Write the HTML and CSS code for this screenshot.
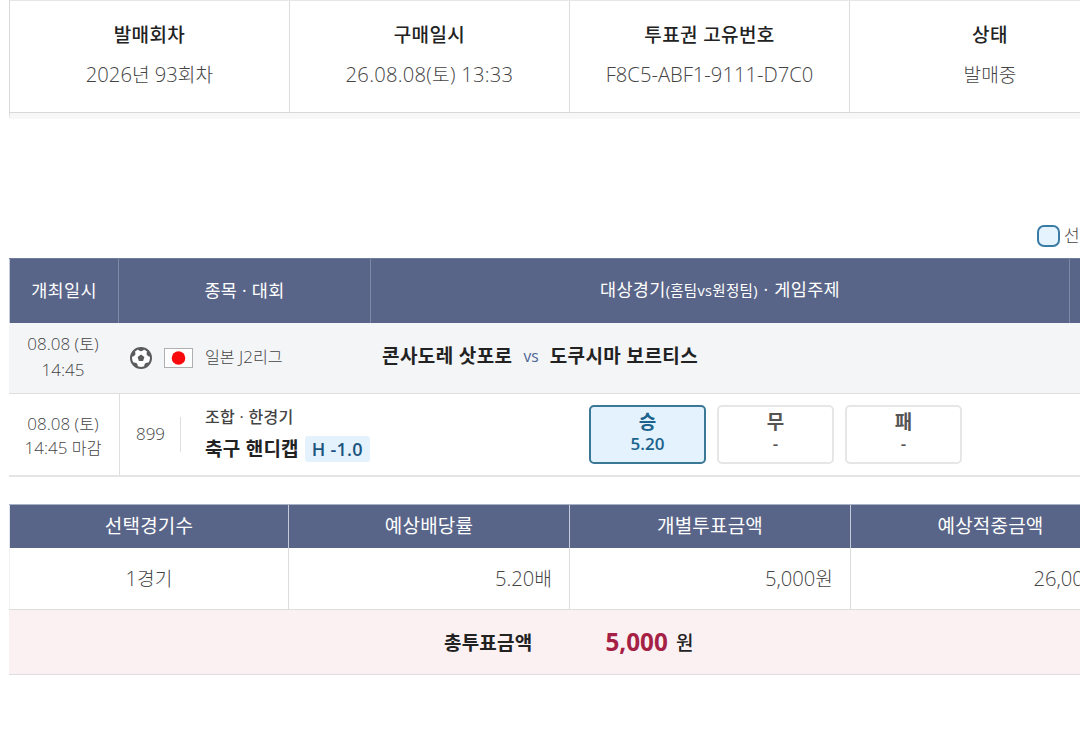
FILE: index.html
```html
<!DOCTYPE html>
<html lang="ko">

<head>
    <meta charset="UTF-8">
    <title>구매내역 상세</title>
    <link rel="stylesheet" href="styles.css">
</head>

<body>
    <div class="wrap">
        <!-- 구매 정보 -->
        <dl class="buyInfo">
            <div>
                <dt>발매회차</dt>
                <dd>2026<span class="ko">년</span> 93<span class="ko">회차</span></dd>
            </div>
            <div>
                <dt>구매일시</dt>
                <dd class="time">26.08.08(<span class="ko">토</span>) 13:33</dd>
            </div>
            <div>
                <dt>투표권 고유번호</dt>
                <dd>F8C5-ABF1-9111-D7C0</dd>
            </div>
            <div>
                <dt>상태</dt>
                <dd><span class="ko">발매중</span></dd>
            </div>
        </dl>

        <div class="legend"><i></i><span>선택</span></div>

        <!-- 대상 경기 -->
        <div class="game">
            <div class="gameRow gameHead">
                <div>개최일시</div>
                <div>종목 · 대회</div>
                <div class="headMain"><p>대상경기<small>(홈팀vs원정팀)</small> · 게임주제</p></div>
                <div></div>
            </div>
            <div class="gameRow match">
                <div class="date">08.08 (<span class="ko">토</span>)<br>14:45</div>
                <div class="league">
                    <svg class="ball" width="24" height="24" viewBox="0 0 24 24">
                        <circle cx="12" cy="12" r="10" fill="#fff" stroke="#5b5b5d" stroke-width="2"/>
                        <path fill="#5b5b5d" d="M12 8.5l3.4 2.5-1.3 4H9.9l-1.3-4zM8.2 2.4h7.6L14 4.4l-2 .8-2-.8zM1.9 9.4l2.4-4.8 1.9 1.2.2 2.6-1.6 1.8-2.2.6zM22.1 9.4l-2.4-4.8-1.9 1.2-.2 2.6 1.6 1.8 2.2.6zM3.8 17l2-.6 2.2 1 .8 2.2-.6 2zM20.2 17l-2-.6-2.2 1-.8 2.2.6 2z"/>
                    </svg>
                    <svg class="flag" width="29" height="20" viewBox="0 0 29 20">
                        <rect x=".5" y=".5" width="28" height="19" fill="#fff" stroke="#b0b0b0"/>
                        <circle cx="14.5" cy="10" r="6.8" fill="#f90a0c"/>
                    </svg>
                    <p><span class="ko">일본</span> J2<span class="ko">리그</span></p>
                </div>
                <div class="teams"><b>콘사도레 삿포로</b><em>vs</em><b>도쿠시마 보르티스</b></div>
                <div></div>
            </div>
            <div class="gameRow bet">
                <div class="date">08.08 (<span class="ko">토</span>)<br>14:45 <span class="ko">마감</span></div>
                <div class="type">
                    <span class="no">899</span>
                    <div>
                        <p class="kind">조합 · 한경기</p>
                        <p class="name">축구 핸디캡<span class="handi">H -1.0</span></p>
                    </div>
                </div>
                <div class="picks">
                    <button type="button" class="on"><b>승</b><span>5.20</span></button>
                    <button type="button"><b>무</b><span>-</span></button>
                    <button type="button"><b>패</b><span>-</span></button>
                </div>
                <div></div>
            </div>
        </div>

        <!-- 투표 금액 -->
        <div class="money">
            <div class="moneyRow moneyHead">
                <div>선택경기수</div>
                <div>예상배당률</div>
                <div>개별투표금액</div>
                <div>예상적중금액</div>
            </div>
            <div class="moneyRow moneyBody">
                <div class="count">1<span class="ko">경기</span></div>
                <div>5.20<span class="ko">배</span></div>
                <div>5,000<span class="ko">원</span></div>
                <div>26,000<span class="ko">원</span></div>
            </div>
            <div class="total">
                <b>총투표금액</b>
                <strong>5,000</strong>
                <span>원</span>
            </div>
        </div>
    </div>
</body>

</html>
```
FILE: styles.css
```css
* {
    box-sizing: border-box;
}

body {
    margin: 0;
    overflow: hidden;
    background-color: #fff;
    color: #444;
    font-family: "Open Sans", "Noto Sans CJK KR", sans-serif;
    font-weight: 300;
}

p, dl, dd {
    margin: 0;
}

/* 숫자 옆 한글은 조금 작게 */
.ko {
    font-size: 0.95em;
}

.wrap {
    width: 1122px;
    margin-left: 9px;
}

/* 구매 정보 */
.buyInfo {
    display: grid;
    grid-template-columns: 280px 280px 280px 281px;
    height: 119px;
    border-top: 1px solid #e6e6e6;
    border-left: 1px solid #d8d8d8;
    border-bottom: 6px solid #f7f7f7;
    text-align: center;
    font-size: 20.2px;
}

.buyInfo > div {
    padding-top: 14px;
    border-right: 1px solid #dcdcdc;
    border-bottom: 1px solid #d8d8d8;
}

.buyInfo dt {
    height: 40px;
    line-height: 41px;
    color: #222;
    font-size: 19px;
    font-weight: 500;
    letter-spacing: 0.4px;
}

.buyInfo dd {
    height: 40px;
    line-height: 39px;
}

.buyInfo .time {
    letter-spacing: 0.25px;
}

.legend {
    display: flex;
    align-items: center;
    height: 24px;
    margin: 105px 0 10px 1028px;
    font-size: 17px;
}

.legend i {
    width: 23px;
    height: 22px;
    margin-right: 4px;
    border: 2px solid #3b7ca6;
    border-radius: 7px;
    background-color: #e4f3fd;
}

.legend span {
    padding-bottom: 3px;
}

/* 대상 경기 */
.gameRow {
    display: grid;
    grid-template-columns: 110px 252px 699px 61px;
}

.gameHead {
    height: 65px;
    border-top: 1px solid #6f7b9d;
    background-color: #596588;
    color: #fff;
    font-size: 17.5px;
    font-weight: 400;
    letter-spacing: 0.3px;
}

.gameHead > div {
    display: flex;
    align-items: center;
    justify-content: center;
    padding-bottom: 4px;
    border-right: 1px solid #7f89a5;
}

.gameHead > div:first-child {
    border-left: 1px solid #c4cad8;
}

.gameHead .headMain {
    padding-bottom: 5px;
    word-spacing: 1px;
}

.gameHead small {
    font-size: 14.5px;
}

.match {
    height: 71px;
    border-bottom: 1px solid #dedede;
    background-color: #f4f5f7;
}

.date {
    text-align: center;
    font-size: 17px;
    line-height: 26px;
    padding: 8px 2px 0 0;
}

.league {
    display: flex;
    align-items: center;
    padding-left: 10px;
    font-size: 17px;
}

.league p {
    padding-bottom: 4px;
}

.flag {
    margin: 0 12px 0 11px;
}

.teams {
    display: flex;
    align-items: center;
    padding: 0 0 6px 11px;
    color: #222;
    font-size: 19px;
    letter-spacing: 0.4px;
}

.teams b {
    font-weight: 700;
}

.teams em {
    margin: 2px 11px 0;
    color: #4c6594;
    font-size: 15.5px;
    font-style: normal;
    font-weight: 400;
    letter-spacing: 0;
}

.bet {
    height: 83px;
    border-bottom: 2px solid #e4e4e4;
}

.bet .date {
    width: 111px;
    padding-top: 18px;
    border-right: 1px solid #dedede;
    line-height: 23px;
}

.type {
    display: flex;
    align-items: center;
}

.no {
    width: 62px;
    height: 35px;
    margin-right: 24px;
    padding-left: 2px;
    border-right: 1px solid #dedede;
    text-align: center;
    font-size: 17px;
    line-height: 34px;
}

.kind {
    height: 28px;
    font-size: 16px;
    font-weight: 500;
    letter-spacing: 0.3px;
    line-height: 20px;
}

.name {
    display: flex;
    align-items: center;
    height: 28px;
    color: #222;
    font-size: 19px;
    font-weight: 700;
    letter-spacing: 0.25px;
    line-height: 24px;
    white-space: nowrap;
}

.handi {
    width: 65px;
    height: 26px;
    margin-left: 6px;
    border-radius: 3px;
    background-color: #e3f2fd;
    color: #1b5580;
    text-align: center;
    font-size: 18px;
    font-weight: 600;
    line-height: 26px;
}

.picks {
    display: flex;
    gap: 11px;
    padding: 11px 0 0 218px;
}

.picks button {
    width: 117px;
    height: 59px;
    padding: 0 0 3px;
    border: 2px solid #e6e6e6;
    border-radius: 5px;
    background-color: #fff;
    color: #555;
    font-family: inherit;
}

.picks b,
.picks span {
    display: block;
    height: 22px;
    line-height: 22px;
}

.picks b {
    font-size: 19px;
}

.picks span {
    font-size: 17px;
    font-weight: 600;
}

.picks .on {
    border-color: #3b7896;
    background-color: #e3f2fc;
    color: #1b628c;
}

/* 투표 금액 */
.money {
    margin-top: 27px;
    font-size: 19px;
}

.moneyRow {
    display: grid;
    grid-template-columns: 280px 281px 281px 280px;
}

.moneyHead {
    height: 44px;
    border-top: 1px solid #a9b1c6;
    background-color: #596588;
    color: #fff;
    text-align: center;
    font-weight: 400;
    letter-spacing: 0.2px;
    line-height: 43px;
}

.moneyHead > div {
    border-right: 1px solid #c4cad8;
}

.moneyHead > div:first-child {
    border-left: 1px solid #e3e6ee;
}

.moneyBody {
    height: 62px;
    border-bottom: 1px solid #dedede;
    text-align: right;
    font-size: 20.2px;
    line-height: 61px;
}

.moneyBody > div {
    padding-right: 17px;
    border-right: 1px solid #dcdcdc;
}

.moneyBody .count {
    padding: 0;
    border-left: 1px solid #f0f0f0;
    text-align: center;
}

.total {
    display: flex;
    align-items: center;
    height: 65px;
    padding-left: 435px;
    border-bottom: 1px solid #dedede;
    background-color: #fbf1f3;
    color: #222;
}

.total b {
    font-weight: 700;
    letter-spacing: 0.2px;
}

.total strong {
    margin: 0 8px 2px 73px;
    color: #a61f45;
    font-size: 24.3px;
    font-weight: 700;
}

.total span {
    font-weight: 500;
}
```
